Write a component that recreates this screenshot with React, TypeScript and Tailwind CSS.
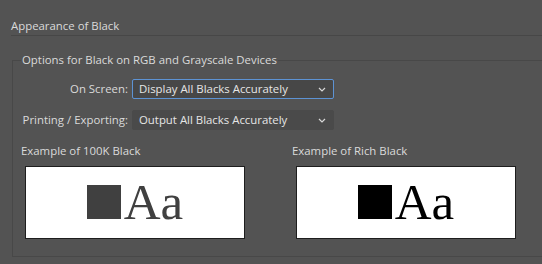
const Chevron = () => (
  <svg width="8" height="5" viewBox="0 0 8 5" className="shrink-0">
    <path d="M1 1l3 3 3-3" fill="none" stroke="#d8d8d8" strokeWidth="1.2" />
  </svg>
);

const Select = ({ value, focused }: { value: string; focused?: boolean }) => (
  <div
    className={
      focused
        ? "ml-[4px] flex h-[20px] w-[202px] items-center justify-between rounded-[2px] border border-[#5d93d4] bg-[#474747] pl-[6px] pr-[7px] text-[#e6e6e6]"
        : "ml-[4px] flex h-[20px] w-[202px] items-center justify-between rounded-[2px] border border-[#4a4a4a] bg-[#4a4a4a] pl-[6px] pr-[7px] text-[#e6e6e6]"
    }
  >
    <span>{value}</span>
    <Chevron />
  </div>
);

const Sample = ({ label, color }: { label: string; color: string }) => (
  <div className="pl-[8px]">
    <div className="leading-[16px]">{label}</div>
    <div className="ml-[4px] mt-[7px] flex h-[73px] w-[220px] items-center justify-center border border-[#1e1e1e] bg-white">
      <div className="flex items-baseline gap-[3px]">
        <div className="h-[34px] w-[34px]" style={{ backgroundColor: color }} />
        <span
          className="font-['Liberation_Serif',serif] text-[51px] leading-none"
          style={{ color }}
        >
          Aa
        </span>
      </div>
    </div>
  </div>
);

export default function App() {
  return (
    <div className="h-[264px] w-[542px] overflow-hidden bg-[#535353] font-['Open_Sans',sans-serif] text-[11.4px] text-[#dadada]">
      <div className="ml-[11px] h-[36px] border-b border-[#474747] pt-[18px] leading-[16px]">
        Appearance of Black
      </div>

      <fieldset className="ml-[12px] mr-[-10px] mt-[16px] h-[205px] border border-[#484848]">
        <legend className="ml-[8px] px-[1px] leading-[16px]">
          Options for Black on RGB and Grayscale Devices
        </legend>

        <div className="mt-[11px] flex items-center">
          <div className="w-[115px] text-right">On Screen:</div>
          <Select value="Display All Blacks Accurately" focused />
        </div>
        <div className="mt-[11px] flex items-center">
          <div className="w-[115px] text-right">Printing / Exporting:</div>
          <Select value="Output All Blacks Accurately" />
        </div>

        <div className="mt-[13px] grid grid-cols-[271px_1fr]">
          <Sample label="Example of 100K Black" color="#404040" />
          <Sample label="Example of Rich Black" color="#000000" />
        </div>
      </fieldset>
    </div>
  );
}
